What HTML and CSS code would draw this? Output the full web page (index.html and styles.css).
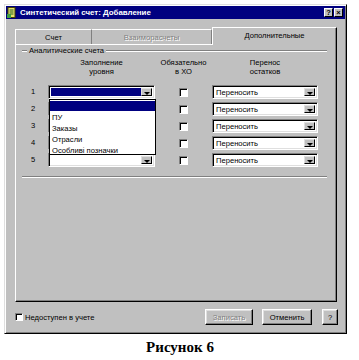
FILE: index.html
```html
<!DOCTYPE html>
<html lang="ru">
<head>
<meta charset="utf-8">
<link rel="stylesheet" href="styles.css">
</head>
<body>
<div class="window">
  <div class="titlebar">
    <svg class="ticon" width="10" height="11" viewBox="0 0 10 11">
      <rect x="1" y="0.5" width="7" height="10" fill="#e8e070" stroke="#404000" stroke-width="1"/>
      <path d="M2.5 3h4M2.5 5h4M2.5 7h4" stroke="#206020" stroke-width="1"/>
      <rect x="0" y="7" width="4" height="4" fill="#40a040"/>
    </svg>
    <span class="title">Синтетический счет: Добавление</span>
    <span class="tbtns"><span class="tbtn">?</span><span class="tbtn">×</span></span>
  </div>
  <div class="tabs">
    <div class="tab t1">Счет</div>
    <div class="tab t2 disabled">Взаиморасчеты</div>
    <div class="tab active">Дополнительные</div>
  </div>
  <div class="panel">
    <div class="legend"><span class="lline short"></span><span class="ltext">Аналитические счета</span><span class="lline"></span></div>
    <div class="grid">
      <div class="hcell"></div>
      <div class="hdr">Заполнение<br>уровня</div>
      <div class="hdr">Обязательно<br>в ХО</div>
      <div class="hdr">Перенос<br>остатков</div>

      <div class="num">1</div>
      <div class="combo focus"><span class="cval"></span><span class="arrow"></span>
        <div class="list">
          <div class="item sel">&nbsp;</div>
          <div class="item">ПУ</div>
          <div class="item">Заказы</div>
          <div class="item">Отрасли</div>
          <div class="item">Особливі позначки</div>
        </div>
      </div>
      <div class="cbcell"><span class="cb"></span></div>
      <div class="combo"><span class="cval">Переносить</span><span class="arrow"></span></div>

      <div class="num">2</div>
      <div class="combo"><span class="cval"></span><span class="arrow"></span></div>
      <div class="cbcell"><span class="cb"></span></div>
      <div class="combo"><span class="cval">Переносить</span><span class="arrow"></span></div>

      <div class="num">3</div>
      <div class="combo"><span class="cval"></span><span class="arrow"></span></div>
      <div class="cbcell"><span class="cb"></span></div>
      <div class="combo"><span class="cval">Переносить</span><span class="arrow"></span></div>

      <div class="num">4</div>
      <div class="combo"><span class="cval"></span><span class="arrow"></span></div>
      <div class="cbcell"><span class="cb"></span></div>
      <div class="combo"><span class="cval">Переносить</span><span class="arrow"></span></div>

      <div class="num">5</div>
      <div class="combo"><span class="cval"></span><span class="arrow"></span></div>
      <div class="cbcell"><span class="cb"></span></div>
      <div class="combo"><span class="cval">Переносить</span><span class="arrow"></span></div>
    </div>
    <div class="gline"></div>
  </div>
  <div class="footer">
    <label class="chk"><span class="cb small"></span>Недоступен в учете</label>
    <div class="btns">
      <span class="btn b1 disabled">Записать</span>
      <span class="btn b2">Отменить</span>
      <span class="btn b3">?</span>
    </div>
  </div>
</div>
<div class="caption">Рисунок 6</div>
</body>
</html>
```
FILE: styles.css
```css
* { box-sizing: border-box; }
body {
  margin: 0;
  background: #fff;
  font-family: "Liberation Sans", Arial, sans-serif;
  font-size: 7.6px;
  color: #000;
}
.window {
  margin: 4px 0 0 4px;
  width: 343px;
  height: 330px;
  background: #c0c0c0;
  border: 1px solid;
  border-color: #dfdfdf #000 #000 #dfdfdf;
  box-shadow: inset 1px 1px #fff, inset -1px -1px #808080;
  padding: 1px;
  display: flex;
  flex-direction: column;
}
.titlebar {
  height: 13px;
  background: #000080;
  display: flex;
  align-items: center;
  padding: 0 2px 0 1px;
  color: #fff;
}
.ticon { flex: none; margin-right: 3px; }
.title { font-weight: bold; font-size: 7.9px; flex: 1; white-space: nowrap; }
.tbtns { display: flex; gap: 1px; }
.tbtn {
  width: 9px; height: 9px;
  background: #c0c0c0;
  color: #000;
  font-size: 7.5px;
  font-weight: bold;
  text-align: center;
  border: 1px solid;
  border-color: #fff #000 #000 #fff;
  line-height: 7px;
}
.tabs {
  display: flex;
  align-items: flex-end;
  height: 17px;
  margin: 8px 8px 0 9px;
  position: relative;
  z-index: 2;
}
.tab {
  height: 15px;
  display: flex;
  align-items: center;
  justify-content: center;
  border-top: 1px solid #fff;
  border-left: 1px solid #fff;
  border-right: 1px solid #808080;
  background: #c0c0c0;
}
.t1 { width: 77px; }
.t2 { width: 120px; border-left: none; }
.tab.disabled { color: #808080; text-shadow: 1px 1px #fff; }
.tab.active {
  flex: 1;
  height: 18px;
  margin-bottom: -1px;
  border-left: 1px solid #fff;
  border-right: 1px solid #000;
  box-shadow: inset -1px 0 #808080;
  padding-bottom: 2px;
}
.panel {
  margin: 0 8px 0 9px;
  height: 258px;
  border: 1px solid;
  border-color: #fff #000 #000 #fff;
  box-shadow: inset -1px -1px #808080;
  padding: 0 9px 0 6px;
  position: relative;
  z-index: 1;
}
.legend {
  display: flex;
  align-items: center;
  height: 11px;
}
.lline {
  flex: 1;
  height: 2px;
  border-top: 1px solid #808080;
  border-bottom: 1px solid #fff;
}
.lline.short { flex: none; width: 5px; }
.ltext { padding: 0 2px; }
.grid {
  display: grid;
  grid-template-columns: 26px 107px 57px 106px;
  grid-template-rows: 24px;
  grid-auto-rows: 14px;
  row-gap: 3px;
  margin-top: 2px;
}
.hdr {
  text-align: center;
  line-height: 9px;
  padding-top: 0;
}
.num { padding-left: 9px; line-height: 14px; }
.combo {
  position: relative;
  display: flex;
  background: #fff;
  border: 1px solid;
  border-color: #808080 #fff #fff #808080;
  box-shadow: inset 1px 1px #000, inset -1px -1px #dfdfdf;
  padding: 2px;
}
.cval {
  flex: 1;
  line-height: 10px;
  padding-left: 1px;
  white-space: nowrap;
}
.combo.focus .cval { background: #000080; }
.arrow {
  width: 11px;
  background: #c0c0c0;
  border: 1px solid;
  border-color: #dfdfdf #000 #000 #dfdfdf;
  position: relative;
}
.arrow::after {
  content: "";
  position: absolute;
  left: 2px; top: 3px;
  border-left: 3px solid transparent;
  border-right: 3px solid transparent;
  border-top: 3px solid #000;
}
.cbcell { display: flex; align-items: center; padding-left: 24px; }
.cb {
  width: 9px; height: 9px;
  background: #fff;
  border: 1px solid;
  border-color: #808080 #fff #fff #808080;
  box-shadow: inset 1px 1px #000;
  display: inline-block;
}
.list {
  position: absolute;
  left: 0;
  top: 13px;
  width: 107px;
  height: 56px;
  background: #fff;
  border: 1px solid #000;
  z-index: 5;
  padding-top: 1px;
}
.item {
  height: 11px;
  line-height: 11px;
  padding-left: 2px;
  white-space: nowrap;
}
.item.sel { background: #000080; height: 10px; margin-bottom: 1px; }
.gline {
  margin-top: 9px;
  height: 2px;
  border-top: 1px solid #808080;
  border-bottom: 1px solid #fff;
}
.footer {
  flex: 1;
  display: flex;
  align-items: center;
  justify-content: space-between;
  padding: 0 7px 0 9px;
}
.chk { display: flex; align-items: center; gap: 2px; }
.cb.small { width: 8px; height: 8px; }
.btns { display: flex; gap: 9px; }
.btn {
  height: 16px;
  display: flex;
  align-items: center;
  justify-content: center;
  border: 1px solid;
  border-color: #fff #000 #000 #fff;
  box-shadow: inset -1px -1px #808080, inset 1px 1px #dfdfdf;
}
.b1 { width: 48px; }
.b2 { width: 50px; }
.b3 { width: 16px; margin-left: 1px; }
.btn.disabled { color: #808080; text-shadow: 1px 1px #fff; }
.caption {
  width: 359px;
  text-align: center;
  font-family: "Liberation Serif", "Times New Roman", serif;
  font-weight: bold;
  font-size: 15px;
  margin-top: 5px;
  padding-left: 1px;
}
```
